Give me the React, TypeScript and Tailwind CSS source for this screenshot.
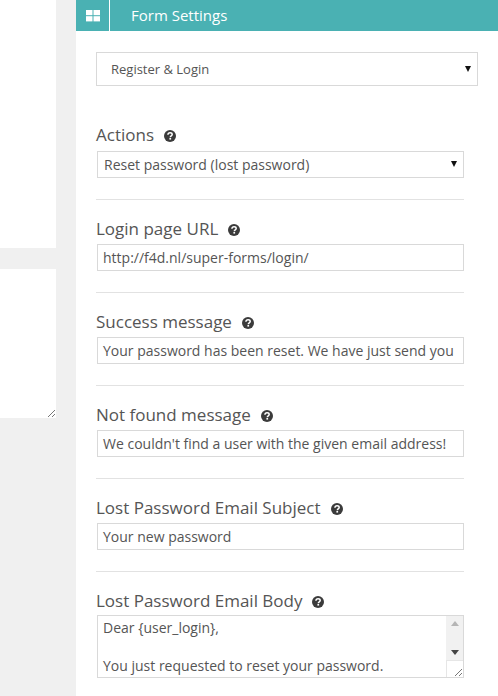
const fields = [
  { label: "Login page URL", value: "http://f4d.nl/super-forms/login/" },
  { label: "Success message", value: "Your password has been reset. We have just send you" },
  { label: "Not found message", value: "We couldn't find a user with the given email address!" },
  { label: "Lost Password Email Subject", value: "Your new password" },
];

function HelpIcon() {
  return (
    <svg viewBox="0 0 12 12" className="ml-[10px] mt-[2px] h-3 w-3 shrink-0">
      <circle cx="6" cy="6" r="6" fill="#3b3b3b" />
      <path d="M3.9 4.7C4 3.5 4.9 2.8 6.1 2.8C7.3 2.8 8.2 3.5 8.2 4.5C8.2 5.9 6.3 5.9 6.3 7.2" fill="none" stroke="#fff" strokeWidth="1.5" />
      <rect x="5.4" y="8" width="1.7" height="1.6" fill="#fff" />
    </svg>
  );
}

function Arrow({ className }: { className?: string }) {
  return (
    <svg viewBox="0 0 6 6" className={`h-[6px] w-[6px] ${className ?? ""}`}>
      <path d="M0 0H6L3 6Z" fill="#111" />
    </svg>
  );
}

function Label({ children, className }: { children: string; className: string }) {
  return (
    <div className={`flex h-[24px] items-center text-[17px] leading-[24px] text-[#555] ${className}`}>
      <span>{children}</span>
      <HelpIcon />
    </div>
  );
}

function Field({ label, value }: { label: string; value: string }) {
  return (
    <section className="border-b border-[#e2e2e2] pb-[21px] pt-[17px]">
      <Label className="mb-[3px]">{label}</Label>
      <div className="ml-px flex h-[27px] items-center overflow-hidden whitespace-nowrap border border-[#d9d9d9] pl-[5px] text-[14px] text-[#555]">
        {value}
      </div>
    </section>
  );
}

export default function App() {
  return (
    <div className="flex h-[696px] w-[498px] overflow-hidden bg-[#f0f0f0] font-['Open_Sans',sans-serif]">
      <aside className="w-[56px] shrink-0">
        <div className="h-[248px] bg-white" />
        <div className="relative mt-[21px] h-[149px] bg-white">
          <svg viewBox="0 0 9 9" className="absolute bottom-0 right-0 h-[9px] w-[9px]">
            <path d="M1 8L8 1M5 8L8 5" stroke="#777" strokeWidth="1" />
          </svg>
        </div>
      </aside>

      <main className="ml-[20px] flex-1 bg-white">
        <header className="flex h-[31px] items-center bg-[#4ab1b3] text-white">
          <div className="flex h-full w-[34px] items-center justify-center border-r border-white">
            <svg viewBox="0 0 14 12" className="h-3 w-[14px]" fill="#fff">
              <rect x="0" y="0" width="6.5" height="5.2" />
              <rect x="7.5" y="0" width="6.5" height="5.2" />
              <rect x="0" y="6.2" width="6.5" height="5.2" />
              <rect x="7.5" y="6.2" width="6.5" height="5.2" />
            </svg>
          </div>
          <h1 className="ml-[21px] text-[15px]">Form Settings</h1>
        </header>

        <div className="pl-[20px]">
          <div className="mt-[21px] flex h-[34px] w-[382px] items-center justify-between border border-[#d9d9d9] pb-px pl-[14px] pr-[6px] text-[13px] text-[#555]">
            <span className="pt-[2px]">Register &amp; Login</span>
            <Arrow />
          </div>

          <div className="w-[368px]">
            <section className="mt-[37px] border-b border-[#e2e2e2] pb-[21px]">
              <Label className="mb-1">Actions</Label>
              <div className="ml-px flex h-[27px] items-center justify-between border border-[#d9d9d9] pl-[6px] pr-[6px] text-[14px] text-[#555]">
                <span>Reset password (lost password)</span>
                <Arrow className="-mt-[2px]" />
              </div>
            </section>

            {fields.map((field) => (
              <Field key={field.label} label={field.label} value={field.value} />
            ))}

            <section className="pt-[17px]">
              <Label className="mb-[2px]">Lost Password Email Body</Label>
              <div className="ml-px flex h-[63px] border border-[#d9d9d9] text-[14px] leading-[19px] text-[#555]">
                <div className="flex-1 overflow-hidden pl-[5px] pt-[2px]">
                  <p>Dear {"{user_login}"},</p>
                  <p className="mt-[19px]">You just requested to reset your password.</p>
                </div>
                <div className="flex w-[17px] flex-col bg-[#f1f1f1]">
                  <div className="flex h-[44px] flex-col items-center justify-between py-[5px]">
                    <svg viewBox="0 0 8 5" className="h-[5px] w-2"><path d="M0 5L4 0L8 5Z" fill="#b5b5b5" /></svg>
                    <svg viewBox="0 0 8 5" className="h-[5px] w-2"><path d="M0 0H8L4 5Z" fill="#444" /></svg>
                  </div>
                  <div className="relative flex-1 border-l border-t border-[#e6e6e6] bg-white">
                    <svg viewBox="0 0 9 9" className="absolute bottom-0 right-0 h-[9px] w-[9px]">
                      <path d="M1 8L8 1M5 8L8 5" stroke="#777" strokeWidth="1" />
                    </svg>
                  </div>
                </div>
              </div>
            </section>
          </div>
        </div>
      </main>
    </div>
  );
}
